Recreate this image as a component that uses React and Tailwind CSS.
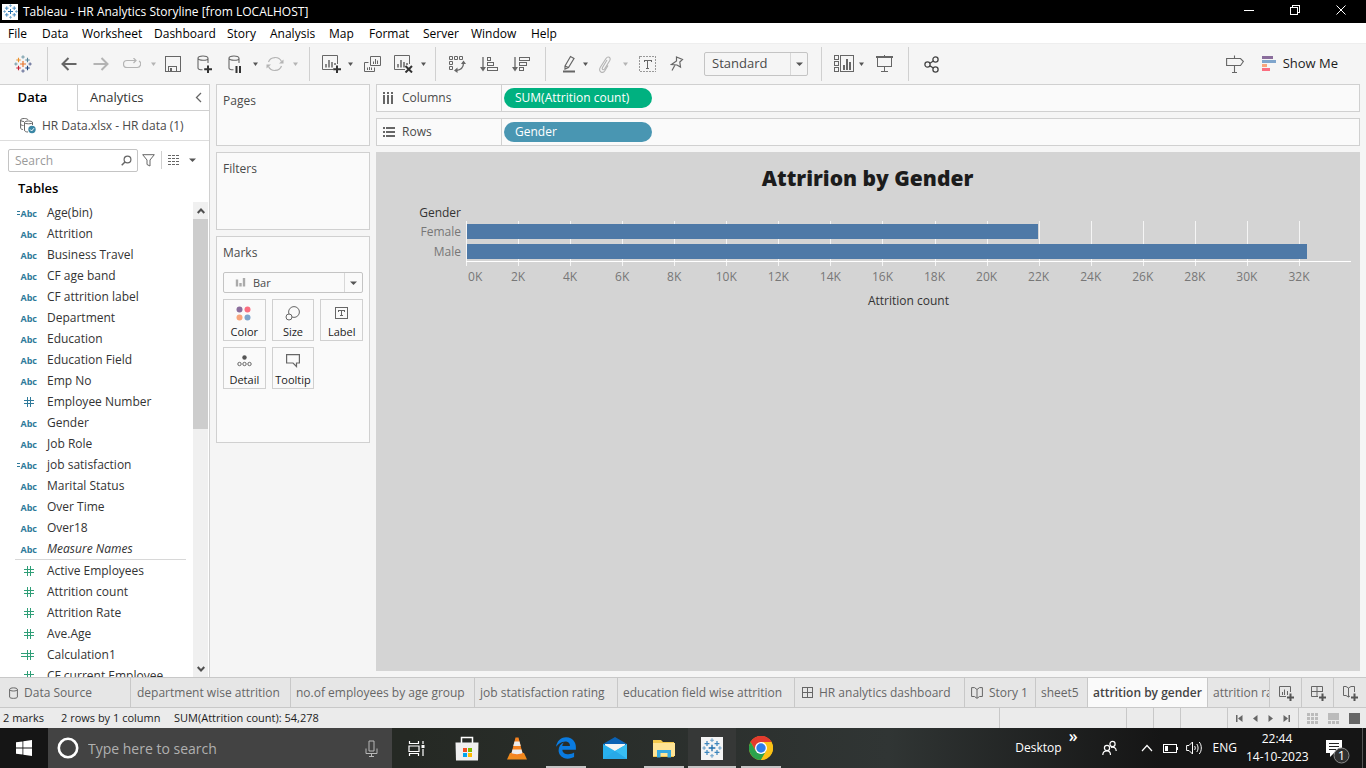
import React from "react";
import { FaEdgeLegacy } from "react-icons/fa6";

const OUT = "#666666";
const DIM = "#b4b4b4";

function Svg({ w, h, children, label, sharp }) {
  return (
    <svg
      width={w}
      height={h}
      viewBox={`0 0 ${w} ${h}`}
      fill="none"
      className="shrink-0"
      aria-hidden={label ? undefined : true}
      shapeRendering={sharp ? "crispEdges" : "auto"}
    >
      {children}
    </svg>
  );
}

const Caret = ({ color = "#555", size = 5 }) => (
  <Svg w={size} h={4}>
    <path d={`M0 0.5H${size}L${size / 2} 4Z`} fill={color} />
  </Svg>
);

/* ---------- Tableau marks ---------- */
const cross = (x, y, r) => `M${x - r} ${y}H${x + r}M${x} ${y - r}V${y + r}`;

function TableauMark({ size = 18, colors }) {
  const c = colors || ["#e8762d", "#c72035", "#1f457e", "#eb912b", "#59879b", "#7199a6", "#5c6692"];
  return (
    <svg width={size} height={size} viewBox="0 0 18 18" fill="none" className="shrink-0" aria-hidden="true">
      <path d={cross(9, 9, 3)} stroke={c[0]} strokeWidth="1.2" />
      <path d={cross(4.5, 13, 2.2)} stroke={c[1]} strokeWidth="1.1" />
      <path d={cross(13.5, 13, 2.2)} stroke={c[2]} strokeWidth="1.1" />
      <path d={cross(4.5, 5, 2.2)} stroke={c[3]} strokeWidth="1.1" />
      <path d={cross(13.5, 5, 2.2)} stroke={c[4]} strokeWidth="1.1" />
      <path d={cross(9, 2, 1.7) + cross(1.9, 9, 1.6)} stroke={c[5]} strokeWidth="1" />
      <path d={cross(9, 16, 1.7) + cross(16.1, 9, 1.6)} stroke={c[6]} strokeWidth="1" />
    </svg>
  );
}

const BLUE = ["#1f6fae", "#3d86bd", "#3d86bd", "#3d86bd", "#3d86bd", "#6ba3cc", "#6ba3cc"];

/* ---------- Toolbar icons ---------- */
const Back = () => (
  <Svg w={16} h={14}><path d="M15.5 7H1.5M7.5 1L1.5 7L7.5 13" stroke={OUT} strokeWidth="2" /></Svg>
);
const Forward = () => (
  <Svg w={16} h={14}><path d="M0.5 7H14.5M8.500 1L14.5 7L8.500 13" stroke={DIM} strokeWidth="2" /></Svg>
);
const Replay = () => (
  <Svg w={18} h={12}>
    <path d="M7 2.500H4A3.500 3.500 0 0 0 4 9.500H14A3.500 3.500 0 0 0 16 3M7 2.500H13M10.500 0L13 2.500L10.500 5" stroke={DIM} strokeWidth="1.2" />
  </Svg>
);
const Save = () => (
  <Svg w={16} h={16} sharp>
    <path d="M0.5 0.5H15.5V15.5H0.5Z" stroke={OUT} />
    <path d="M3.5 15.5V10.5H11.5V15.5" stroke={OUT} />
    <path d="M5 12H7V15H5Z" fill={OUT} />
  </Svg>
);
const DbShape = () => (
  <path d="M1 3.2C1 0.300 11 0.300 11 3.200C11 6 1 6 1 3.200ZM1 3.200V13C1 14.200 3 14.800 5.500 14.800M11 3.200V8" stroke={OUT} strokeWidth="1.1" />
);
const DbPlus = () => (
  <Svg w={16} h={18}><DbShape /><path d="M11 10.500V18M7.200 14.200H15" stroke="#333" strokeWidth="2" /></Svg>
);
const DbPause = () => (
  <Svg w={16} h={18}><DbShape /><path d="M8.500 11V18M12 11V18" stroke="#333" strokeWidth="2" /></Svg>
);
const Refresh = () => (
  <Svg w={18} h={16}>
    <path d="M2.500 6A7 6.700 0 0 1 15.500 5.500M15.500 10A7 6.700 0 0 1 2.500 10.500" stroke={DIM} strokeWidth="1.2" />
    <path d="M17.500 3.500V7.500H13ZM0.5 12.500V8.500H5Z" fill={DIM} />
  </Svg>
);
const ChartBox = ({ children }) => (
  <Svg w={19} h={18}>
    <path d="M11 14.500H0.5V0.5H15.500V9" stroke={OUT} />
    <path d="M4 12.500V9M7 12.500V5M10 12.500V7M13 10V8" stroke={OUT} strokeWidth="1.5" />
    {children}
  </Svg>
);
const NewSheet = () => <ChartBox><path d="M15 10.500V18M11.200 14.200H19" stroke="#333" strokeWidth="2" /></ChartBox>;
const ClearSheet = () => <ChartBox><path d="M11.500 11L18 17.500M18 11L11.500 17.500" stroke="#333" strokeWidth="2" /></ChartBox>;
const Duplicate = () => (
  <Svg w={17} h={16}>
    <path d="M6.500 0.5H16.500V9.500H6.500ZM4.500 6.500H0.5V15.500H10.500V11.500" stroke={OUT} />
    <path d="M9.500 8V5.500M11.500 8V3M13.500 8V4.500M3.500 14V11.500M5.500 14V11M7.500 14V11.500" stroke={OUT} />
  </Svg>
);
const Swap = () => (
  <Svg w={18} h={18}>
    <path d="M1.500 1.500H4.500V4.500H1.500ZM6.500 1.500H9.500V4.500H6.500ZM11.500 1.500H14.500V4.500H11.500ZM1.500 6.500H4.500V9.500H1.500ZM1.500 11.500H4.500V14.500H1.500Z" stroke={OUT} />
    <path d="M15.500 8C15.500 12 13 15 8 15.500" stroke={OUT} strokeWidth="1.3" />
    <path d="M13 9L15.500 5.500L18 9ZM9.500 12.500L6 15.500L9.500 18Z" fill={OUT} />
  </Svg>
);
const SortBars = ({ rows }) => (
  <Svg w={18} h={16}>
    <path d="M3 1V12" stroke={OUT} strokeWidth="1.3" />
    <path d="M0 11H6L3 15.500Z" fill={OUT} />
    {rows.map((r, i) => (
      <rect key={i} x="7.500" y={1.5 + i * 5} width={r} height="3" stroke={OUT} />
    ))}
  </Svg>
);
const Highlight = () => (
  <Svg w={14} h={18}>
    <path d="M3 11L8.500 1.500L12 3.500L6.500 12.500L3 14ZM3 11L6.500 12.500" stroke={OUT} strokeWidth="1.2" />
    <path d="M1 16.500H13" stroke={OUT} strokeWidth="2" />
  </Svg>
);
const Clip = () => (
  <Svg w={14} h={17}>
    <path d="M9 4L4.500 11.500C3.500 13.500 5.500 14.500 6.500 13L11.500 5C13.500 1.500 10 -0.500 8 2.500L2.500 11C-0.500 16 5 18 7 14.500L10 9.500" stroke={DIM} strokeWidth="1.1" />
  </Svg>
);
const TextLabel = () => (
  <Svg w={17} h={16} sharp>
    <path d="M0.5 0.5H16.5V15.5H0.5Z" stroke="#999" strokeDasharray="2 1" />
    <path d="M5 6V4.500H12V6M8.500 4.500V12M7 12.500H10" stroke={OUT} />
  </Svg>
);
const Pin = () => (
  <Svg w={14} h={16}>
    <path d="M6.500 1L12.500 3.500L9.800 6L10.500 11L7 9L1.500 8.500L6.500 5ZM5 9L2 14.500" stroke={OUT} strokeWidth="1.2" />
  </Svg>
);
const Cards = () => (
  <Svg w={20} h={18} sharp>
    <path d="M0.5 0.5H4.500V4.500H0.5ZM0.5 6.500H4.500V10.500H0.5ZM0.5 12.500H4.500V16.500H0.5ZM6.500 0.5H19.500V16.500H6.500Z" stroke={OUT} />
    <path d="M9 15V10H11V15ZM12 15V4H14V15ZM15 15V7H17V15Z" fill={OUT} />
  </Svg>
);
const Present = () => (
  <Svg w={17} h={18} sharp>
    <path d="M0 2H17" stroke={OUT} strokeWidth="2" />
    <path d="M1.500 2V11.500H15.500V2M8.500 0V2M8.500 11V16.500M5 16.500H12" stroke={OUT} />
  </Svg>
);
const Share = () => (
  <Svg w={16} h={17}>
    <g stroke="#444" strokeWidth="1.3">
      <circle cx="3.500" cy="8.500" r="2.600" /><circle cx="11.500" cy="3.500" r="2.600" /><circle cx="11.500" cy="13.500" r="2.600" />
      <path d="M6 7.200L9.300 5M6 9.900L9.300 12" />
    </g>
  </Svg>
);
const Signpost = () => (
  <Svg w={18} h={20}>
    <path d="M0.600 4.500H14.500L17.400 7.500L14.500 11.500H0.600ZM8.500 1.500V4.500M8.500 11.500V19M6 18.500H11" stroke={OUT} strokeWidth="1.1" />
  </Svg>
);
const ShowMeIcon = () => (
  <Svg w={15} h={16} sharp>
    <path d="M0 0H11V3H0Z" fill="#8a6d9c" /><path d="M0 4H14V7H0Z" fill="#7fa5cc" />
    <path d="M0 8H5V11H0Z" fill="#f8a57c" /><path d="M0 12H8V15H0Z" fill="#fb6e80" />
  </Svg>
);

const Tool = ({ w, label, children, disabled }) => (
  <button aria-label={label} disabled={disabled} className={`flex h-full shrink-0 items-center justify-center ${w}`}>
    {children}
  </button>
);
const Sep = ({ w }) => (
  <span className={`flex shrink-0 justify-center ${w}`}><span className="h-[34px] w-px bg-[#d0d0d0]" /></span>
);

function Toolbar() {
  return (
    <div className="flex h-[41px] shrink-0 items-center bg-[#f5f5f5] border-t border-[#eeeeee]">
      <Tool w="w-[46px]" label="Start page"><TableauMark /></Tool>
      <Sep w="w-[3px]" />
      <Tool w="w-10" label="Undo"><Back /></Tool>
      <Tool w="w-6" label="Redo"><Forward /></Tool>
      <Tool w="w-[38px]" label="Replay animation"><Replay /></Tool>
      <Tool w="w-1" label="Replay options"><Caret color={DIM} /></Tool>
      <Tool w="w-9" label="Save"><Save /></Tool>
      <Tool w="w-7" label="New data source"><DbPlus /></Tool>
      <Tool w="w-[34px]" label="Pause auto updates"><DbPause /></Tool>
      <Tool w="w-1" label="Update options"><Caret /></Tool>
      <Tool w="w-9" label="Run update"><Refresh /></Tool>
      <Tool w="w-1" label="Run options"><Caret color={DIM} /></Tool>
      <Sep w="w-6" />
      <Tool w="w-5" label="New worksheet"><NewSheet /></Tool>
      <Tool w="w-[18px]" label="New worksheet options"><Caret /></Tool>
      <Tool w="w-[26px]" label="Duplicate"><Duplicate /></Tool>
      <Tool w="w-9" label="Clear sheet"><ClearSheet /></Tool>
      <Tool w="w-1" label="Clear options"><Caret /></Tool>
      <Sep w="w-5" />
      <Tool w="w-6" label="Swap rows and columns"><Swap /></Tool>
      <Tool w="w-10" label="Sort ascending"><SortBars rows={[3, 6, 10]} /></Tool>
      <Tool w="w-6" label="Sort descending"><SortBars rows={[10, 7, 4]} /></Tool>
      <Sep w="w-6" />
      <Tool w="w-6" label="Highlight"><Highlight /></Tool>
      <Tool w="w-2" label="Highlight options"><Caret /></Tool>
      <Tool w="w-8" label="Group members"><Clip /></Tool>
      <Tool w="w-2" label="Group options"><Caret color={DIM} /></Tool>
      <Tool w="w-9" label="Show mark labels"><TextLabel /></Tool>
      <Tool w="w-6" label="Fix axes"><Pin /></Tool>
      <div className="relative ml-[15px] h-6 w-[104px] shrink-0">
        <select aria-label="Fit" className="block h-full w-full appearance-none rounded-[2px] border border-[#c4c4c4] bg-[#f5f5f5] pl-[7px] text-[13px] text-[#4a4a4a]">
          <option>Standard</option>
        </select>
        <span className="pointer-events-none absolute right-px top-px flex h-[22px] w-[17px] items-center justify-center border-l border-[#d8d8d8]"><Caret size={7} /></span>
      </div>
      <Sep w="w-[26px]" />
      <Tool w="w-5" label="Show or hide cards"><Cards /></Tool>
      <Tool w="w-[14px]" label="Card options"><Caret /></Tool>
      <Tool w="w-8" label="Presentation mode"><Present /></Tool>
      <Sep w="w-4" />
      <Tool w="w-8" label="Share"><Share /></Tool>
      <div className="ml-auto flex items-center pr-7">
        <Tool w="w-5" label="Data guide"><Signpost /></Tool>
        <button className="ml-[17px] flex items-center gap-1.5 text-[13px] text-[#1c1c1c]"><ShowMeIcon />Show Me</button>
      </div>
    </div>
  );
}

/* ---------- Data pane ---------- */
const DIMENSIONS = [
  ["=Abc", "Age(bin)"], ["Abc", "Attrition"], ["Abc", "Business Travel"], ["Abc", "CF age band"],
  ["Abc", "CF attrition label"], ["Abc", "Department"], ["Abc", "Education"], ["Abc", "Education Field"],
  ["Abc", "Emp No"], ["#", "Employee Number"], ["Abc", "Gender"], ["Abc", "Job Role"],
  ["=Abc", "job satisfaction"], ["Abc", "Marital Status"], ["Abc", "Over Time"], ["Abc", "Over18"],
  ["Abc", "Measure Names"],
];
const MEASURES = [
  ["#", "Active Employees"], ["#", "Attrition count"], ["#", "Attrition Rate"], ["#", "Ave.Age"],
  ["=#", "Calculation1"], ["#", "CF current Employee"],
];

const Hash = ({ color }) => (
  <Svg w={10} h={10} sharp><path d="M3.500 0V10M6.500 0V10M0 3.500H10M0 6.500H10" stroke={color} /></Svg>
);
const Equals = ({ color }) => (
  <Svg w={3} h={4} sharp><path d="M0 0.500H3M0 3.500H3" stroke={color} /></Svg>
);

function Field({ type, name, green }) {
  const calc = type.startsWith("=");
  const color = green ? "#2f9e77" : "#2f7a9a";
  return (
    <li className="flex h-[21px] items-center">
      <span className={`flex w-[37px] shrink-0 items-center justify-end text-[9px] font-bold ${green ? "text-[#2f9e77]" : "text-[#2f7a9a]"}`}>
        {calc && <Equals color={color} />}
        {type.endsWith("#") ? <span className="pr-[3px]"><Hash color={color} /></span> : <span className="pt-0.5">Abc</span>}
      </span>
      <span className={`pl-[10px] ${name === "Measure Names" ? "italic" : ""}`}>{name}</span>
    </li>
  );
}

function DataPane() {
  return (
    <aside className="flex w-[210px] shrink-0 flex-col border-r border-t border-[#d0d0d0] bg-white text-[12px] text-[#333]">
      <div className="flex h-[26px] shrink-0 text-[13px] text-black">
        <button className="w-[77px] pr-3 text-center font-semibold">Data</button>
        <div className="flex flex-1 items-center justify-between border-b border-l border-[#d0d0d0] pl-3 pr-[7px] text-[#333]">
          <button>Analytics</button>
          <button aria-label="Collapse pane"><Svg w={7} h={11}><path d="M6 1L1.500 5.500L6 10" stroke={OUT} strokeWidth="1.300" /></Svg></button>
        </div>
      </div>
      <button className="flex h-[30px] shrink-0 items-center gap-1.5 border-b border-[#dddddd] pl-5 text-[#4a4a4a]">
        <Svg w={16} h={17}>
          <path d="M0.600 3C0.600 1 8 1 8 3M0.600 3V11C0.600 12 2 12.500 3 12.500M0.600 3C0.600 4.200 3 4.500 4 4.500M4.500 5.500C4.500 3.500 12.500 3.500 12.500 5.500C12.500 7.200 4.500 7.200 4.500 5.500ZM4.500 5.500V13C4.500 14.500 6 15 8 15M12.500 5.500V8M0.600 7C0.600 8 2 8.500 3.500 8.500" stroke={OUT} />
          <circle cx="12" cy="12.500" r="3.700" fill="#3a87a5" />
          <path d="M10.200 12.500L11.600 14L14 11.200" stroke="white" />
        </Svg>
        HR Data.xlsx - HR data (1)
      </button>
      <div className="mt-[7px] flex h-6 shrink-0 items-center pl-2">
        <div className="relative h-[23px] w-[130px]">
          <input aria-label="Search fields" placeholder="Search" className="block h-full w-full rounded-[2px] border border-[#c4c4c4] pl-[6px] placeholder:text-[#9a9a9a]" />
          <span className="absolute right-[6px] top-[6px]">
            <Svg w={11} h={11}><circle cx="6.500" cy="4.500" r="3.400" stroke={OUT} strokeWidth="1.200" /><path d="M4 7L0.700 10.300" stroke={OUT} strokeWidth="1.500" /></Svg>
          </span>
        </div>
        <button aria-label="Filter" className="ml-1"><Svg w={13} h={13}><path d="M0.700 0.700H12.300L8 6V12L5 10.500V6Z" stroke={OUT} /></Svg></button>
        <span className="ml-1.5 h-[18px] w-px bg-[#d0d0d0]" />
        <button aria-label="View options" className="ml-1.5 flex items-center gap-[9px]">
          <Svg w={12} h={10} sharp><path d="M0 0.500H12M0 3.500H12M0 6.500H12M0 9.500H12" stroke={OUT} strokeDasharray="3 1" /></Svg>
          <Caret size={7} />
        </button>
      </div>
      <h2 className="mt-[6px] h-5 shrink-0 pl-[18px] text-[13px] font-semibold leading-5 text-black">Tables</h2>
      <div className="mt-1 flex min-h-0 flex-1">
        <div className="min-w-0 flex-1 overflow-hidden">
          <ul>{DIMENSIONS.map(([t, n]) => <Field key={n} type={t} name={n} />)}</ul>
          <div className="ml-[15px] mr-[7px] border-t border-[#d8d8d8]" />
          <ul>{MEASURES.map(([t, n]) => <Field key={n} type={t} name={n} green />)}</ul>
        </div>
        <div className="mr-px flex w-[15px] shrink-0 flex-col items-center justify-between bg-[#f0f0f0]">
          <div className="flex w-full flex-col items-center">
            <button aria-label="Scroll up" className="flex h-[17px] items-center"><Svg w={8} h={6}><path d="M0.700 5L4 1.500L7.300 5" stroke="#505050" strokeWidth="2" /></Svg></button>
            <div className="h-[210px] w-full bg-[#cdcdcd]" />
          </div>
          <button aria-label="Scroll down" className="flex h-[17px] items-center"><Svg w={8} h={6}><path d="M0.700 1L4 4.500L7.300 1" stroke="#505050" strokeWidth="2" /></Svg></button>
        </div>
      </div>
    </aside>
  );
}

/* ---------- Cards ---------- */
const MARKS = [
  ["Color", <Svg w={16} h={15}><circle cx="3.500" cy="3.500" r="3" fill="#8a6d9c" /><circle cx="11.500" cy="3.500" r="3" fill="#fb6e80" /><circle cx="3.500" cy="11.500" r="3" fill="#f8a57c" /><circle cx="11.500" cy="11.500" r="3" fill="#7fa5cc" /></Svg>],
  ["Size", <Svg w={16} h={15}><circle cx="9" cy="6" r="5.400" stroke={OUT} /><circle cx="4" cy="11" r="3" fill="#fafafa" stroke={OUT} /></Svg>],
  ["Label", <Svg w={14} h={13} sharp><path d="M0.500 0.500H12.500V11.500H0.500ZM3.500 4.500V3.500H9.500V4.500M6.500 3.500V8.500M5 8.500H8" stroke={OUT} /></Svg>],
  ["Detail", <Svg w={15} h={12}><circle cx="7.500" cy="2.500" r="2.200" fill="#555" /><circle cx="2.500" cy="9" r="1.700" stroke={OUT} /><circle cx="7.500" cy="9" r="1.700" stroke={OUT} /><circle cx="12.500" cy="9" r="1.700" stroke={OUT} /></Svg>],
  ["Tooltip", <Svg w={14} h={14}><path d="M0.600 0.600H13.400V9H10.500V12.500L7 9H0.600Z" stroke={OUT} strokeWidth="1.200" /></Svg>],
];

function CardsColumn() {
  const card = "border border-[#d0d0d0] bg-[#fafafa] px-[6px] pt-[7px]";
  return (
    <section className="flex w-[154px] shrink-0 flex-col gap-[6px] text-[12px] leading-[18px] text-[#4a4a4a]">
      <div className={`h-[62px] ${card}`}>Pages</div>
      <div className={`h-[78px] ${card}`}>Filters</div>
      <div className={`h-[207px] ${card}`}>
        Marks
        <div className="relative mt-[10px] h-[21px]">
          <select aria-label="Mark type" className="block h-full w-full appearance-none rounded-[2px] border border-[#c4c4c4] bg-[#fafafa] pl-[29px] text-[11px] text-[#4a4a4a]"><option>Bar</option></select>
          <span className="pointer-events-none absolute left-3 top-[5px]"><Svg w={11} h={10}><path d="M2 2.500V9.500M5.500 6V9.500M9 1V9.500" stroke="#aaa" strokeWidth="2.400" /></Svg></span>
          <span className="pointer-events-none absolute right-px top-px flex h-[19px] w-[18px] items-center justify-center border-l border-[#d8d8d8]"><Caret size={7} /></span>
        </div>
        <div className="mt-[6px] grid grid-cols-3 gap-[6px]">
          {MARKS.map(([name, icon]) => (
            <button key={name} className="flex h-[42px] flex-col items-center justify-between whitespace-nowrap border border-[#d0d0d0] pt-[5px] text-[11px] leading-4 text-[#1c1c1c]">
              <span className="flex h-4 items-center">{icon}</span>{name}
            </button>
          ))}
        </div>
      </div>
    </section>
  );
}

/* ---------- Shelves and view ---------- */
function Shelf({ label, icon, pill, color }) {
  return (
    <div className="flex h-7 shrink-0 border border-[#d0d0d0] bg-[#fafafa] text-[12px]">
      <div className="flex w-[125px] items-center gap-[7px] border-r border-[#d0d0d0] pl-[6px] text-[#4a4a4a]">{icon}{label}</div>
      <button className={`ml-0.5 mt-[3px] h-5 w-[148px] rounded-full pl-[11px] text-left font-medium leading-5 text-white ${color}`}>{pill}</button>
    </div>
  );
}

const MAX = 34;
const TICKS = Array.from({ length: 17 }, (_, i) => i * 2);
const BARS = [["Female", 21.96], ["Male", 32.318]];
const pct = (v) => `${(v / MAX) * 100}%`;

function View() {
  return (
    <section className="min-h-0 flex-1 bg-[#d4d4d4] pr-[9px] text-[12px]">
      <h1 className="h-[52px] pl-2 pt-3 text-center text-[21px] font-extrabold leading-7 text-[#1c1c1c]">Attririon by Gender</h1>
      <div className="flex">
        <div className="w-[90px] shrink-0 pr-[5px] text-right text-[#777]">
          <div className="h-[18px] leading-[18px] font-medium text-[#333]">Gender</div>
          {BARS.map(([n]) => <div key={n} className="h-5 leading-5">{n}</div>)}
        </div>
        <div className="min-w-0 flex-1 pt-[17px]">
          <div className="relative h-[45px]">
            {TICKS.map((t) => <span key={t} className="absolute inset-y-0 w-px bg-[#f5f5f5]" style={{ left: pct(t) }} />)}
            <span className="absolute inset-x-0 top-10 h-px bg-white" />
            <div className="relative flex flex-col gap-[5px] pl-px pt-[3px]">
              {BARS.map(([n, v]) => <div key={n} className="h-[15px] bg-[#4e79a7]" style={{ width: pct(v) }} />)}
            </div>
          </div>
          <div className="relative h-[26px] text-[#777]">
            {TICKS.map((t) => (
              <span key={t} className={`absolute top-[2px] leading-[18px] ${t ? "-translate-x-1/2" : "pl-0.5"}`} style={{ left: pct(t) }}>{t}K</span>
            ))}
          </div>
          <div className="text-center leading-[18px] font-medium text-[#333]">Attrition count</div>
        </div>
      </div>
    </section>
  );
}

/* ---------- Sheet tabs and status bar ---------- */
const Grid = () => <Svg w={11} h={11} sharp><path d="M0.500 0.500H10.500V10.500H0.500ZM5.500 0.500V10.500M0.500 5.500H10.500" stroke={OUT} /></Svg>;
const Book = () => <Svg w={12} h={12}><path d="M0.600 0.600H3.500L6 2.500L8.500 0.600H11.400V9.500H8.500L6 11.400L3.500 9.500H0.600ZM6 2.500V11" stroke={OUT} /></Svg>;
const Cylinder = () => <Svg w={9} h={12}><path d="M0.600 2.500C0.600 0.300 8.400 0.300 8.400 2.500C8.400 4.500 0.600 4.500 0.600 2.500ZM0.600 2.500V10C0.600 11.800 8.400 11.800 8.400 10V2.500" stroke={OUT} /></Svg>;

const TABS = [
  ["Data Source", "w-[131px] pl-[9px]", <Cylinder />],
  ["department wise attrition", "w-[160px] pl-[6px]"],
  ["no.of employees by age group", "w-[184px] pl-[5px]"],
  ["job statisfaction rating", "w-[143px] pl-[5px]"],
  ["education field wise attrition", "w-[177px] pl-[5px]"],
  ["HR analytics dashboard", "w-[170px] pl-[7px]", <Grid />],
  ["Story 1", "w-[71px] pl-[6px]", <Book />],
  ["sheet5", "w-[52px] pl-[5px]"],
  ["attrition by gender", "w-[120px] pl-[5px] bg-[#fafafa] font-semibold text-[#444]"],
];
const Plus = () => <path d="M12.500 8.500V16M9 12.500H16" stroke="#555" strokeWidth="2" />;

function SheetTabs() {
  return (
    <nav className="flex h-[31px] shrink-0 border-y border-[#c8c8c8] bg-[#e6e6e6] text-[12px] text-[#666]">
      {TABS.map(([name, cls, icon]) => (
        <button key={name} className={`flex shrink-0 items-center gap-[6px] whitespace-nowrap border-r border-[#c8c8c8] ${cls}`}>{icon}{name}</button>
      ))}
      <button className="min-w-0 flex-1 overflow-hidden whitespace-nowrap border-r border-[#c8c8c8] pl-[5px] text-left">attrition rate</button>
      <button aria-label="New worksheet" className="flex w-8 items-center justify-center border-r border-[#c8c8c8]">
        <Svg w={16} h={16}><path d="M8 11.500H1.500V1.500H12.500V7M4.500 10V7M6.500 10V4.500M9.500 10V6" stroke={OUT} /><Plus /></Svg>
      </button>
      <button aria-label="New dashboard" className="flex w-8 items-center justify-center border-r border-[#c8c8c8]">
        <Svg w={16} h={16}><path d="M8 11.500H1.500V1.500H12.500V7M7 1.500V11.500M1.500 6.500H12.500" stroke={OUT} /><Plus /></Svg>
      </button>
      <button aria-label="New story" className="flex w-8 items-center justify-center">
        <Svg w={16} h={16}><path d="M8 11L6.500 12L4 10.500H1.500V1.500H4L6.500 3L9 1.500H12.500V7M6.500 3V12" stroke={OUT} /><Plus /></Svg>
      </button>
    </nav>
  );
}

function StatusBar() {
  const cell = "h-full shrink-0 border-l border-[#c8c8c8]";
  return (
    <footer className="flex h-5 shrink-0 items-center bg-[#ebebeb] text-[11px] text-[#1c1c1c]">
      <span className="w-[58px] pl-[3px]">2 marks</span>
      <span className="w-[113px] pl-[3px]">2 rows by 1 column</span>
      <span className="flex-1 pl-[3px]">SUM(Attrition count): 54,278</span>
      <span className={`w-[127px] ${cell}`} />
      <span className={`w-[27px] ${cell}`} />
      <span className={`w-[27px] ${cell}`} />
      <span className={`w-[47px] ${cell}`} />
      <div className={`flex w-[71px] items-center justify-between px-2 ${cell}`}>
        <button aria-label="First sheet"><Svg w={7} h={7}><path d="M0 0H1.500V7H0ZM6.500 0V7L2 3.500Z" fill={OUT} /></Svg></button>
        <button aria-label="Previous sheet"><Svg w={5} h={7}><path d="M4.500 0V7L0 3.500Z" fill={OUT} /></Svg></button>
        <button aria-label="Next sheet"><Svg w={5} h={7}><path d="M0.500 0V7L5 3.500Z" fill={OUT} /></Svg></button>
        <button aria-label="Last sheet"><Svg w={7} h={7}><path d="M5.500 0H7V7H5.500ZM0.500 0V7L5 3.500Z" fill={OUT} /></Svg></button>
      </div>
      <div className={`flex w-[68px] items-center gap-2.5 pl-2 ${cell}`}>
        <button aria-label="Sheet sorter"><Svg w={11} h={11} sharp><path d="M0 1.500H11M0 5.500H11M0 9.500H11" stroke="#bbb" strokeWidth="3" strokeDasharray="3 1" /></Svg></button>
        <button aria-label="Filmstrip"><Svg w={11} h={11} sharp><path d="M0 0H11V7H0Z" fill="#bbb" /><path d="M0 9.500H11" stroke="#bbb" strokeWidth="3" strokeDasharray="3 1" /></Svg></button>
        <button aria-label="Tabs"><Svg w={11} h={11} sharp><path d="M0 0H11V11H0Z" fill={OUT} /></Svg></button>
      </div>
    </footer>
  );
}

/* ---------- Windows taskbar ---------- */
const TaskButton = ({ label, open, active, children, w = "w-[49px]" }) => (
  <button aria-label={label} className={`flex h-full shrink-0 flex-col items-center ${w} ${active ? "bg-[#363837]" : ""}`}>
    <span className="flex flex-1 items-center pt-0.5">{children}</span>
    <span className={`h-0.5 ${active ? "w-full" : "w-10"} ${open ? "bg-[#c4c4c4]" : ""}`} />
  </button>
);

function Taskbar() {
  return (
    <div className="flex h-10 shrink-0 items-center bg-linear-to-r from-[#252924] from-30% via-[#303534] via-65% to-[#151515] to-85% text-[12px] text-white">
      <button aria-label="Start" className="flex h-full w-12 shrink-0 items-center justify-center bg-[#151515]">
        <Svg w={16} h={16}><path d="M0 2.300L6.500 1.400V7.600H0ZM7.300 1.300L16 0V7.600H7.300ZM0 8.400H6.500V14.600L0 13.700ZM7.300 8.400H16V16L7.300 14.700Z" fill="white" /></Svg>
      </button>
      <div className="flex h-full w-[344px] shrink-0 items-center bg-[#434343] pl-[9px] pr-3.5">
        <Svg w={22} h={22}><circle cx="11" cy="11" r="9.200" stroke="white" strokeWidth="2.600" /></Svg>
        <input aria-label="Type here to search" placeholder="Type here to search" className="min-w-0 flex-1 bg-transparent pl-[9px] text-[14px] placeholder:text-[#b0b0b0]" />
        <button aria-label="Voice search"><Svg w={13} h={17}><path d="M4 1H9V11H4ZM1 8.500V13.500H12V8.500M6.500 13.500V16.500M4 16.500H9" stroke="#b8b8b8" /></Svg></button>
      </div>
      <TaskButton label="Task view"><Svg w={17} h={15}><path d="M1.500 0V2.500H10.500V0M1 5H11V10.500H1ZM1.500 15V12.500H10.500V15M15 0V3M15 8V15" stroke="white" strokeWidth="1.200" /><path d="M13.500 4H16.500V7H13.500Z" fill="white" /></Svg></TaskButton>
      <TaskButton label="Microsoft Store" w="w-[51px]"><Svg w={24} h={25}><path d="M6.500 7V1.500H17.500V7" stroke="white" strokeWidth="1.500" /><path d="M0.500 6.500H23.500L23 24.500H1Z" fill="#efefef" /><path d="M8 12H12V16H8Z" fill="#f25022" /><path d="M13 12H17V16H13Z" fill="#7fba00" /><path d="M8 17H12V21H8Z" fill="#00a4ef" /><path d="M13 17H17V21H13Z" fill="#ffb900" /></Svg></TaskButton>
      <TaskButton label="VLC"><Svg w={20} h={23}><path d="M3 16H17L20 22.500H0Z" fill="#f08a1c" /><path d="M8.500 0.500H11.500L16 18C14 20 6 20 4 18Z" fill="#f58220" /><path d="M7.500 4.500H12.500L13.700 9H6.300Z" fill="#ececec" /><path d="M5.500 12.500H14.500L15.500 16C13.500 17.500 6.500 17.500 4.500 16Z" fill="#ececec" /></Svg></TaskButton>
      <TaskButton label="Edge" open><FaEdgeLegacy size={22} color="#0a7be0" /></TaskButton>
      <TaskButton label="Mail"><Svg w={24} h={23}><path d="M0 7L12 0L24 7V13H0Z" fill="#0a62b5" /><path d="M2 7H22V15H2Z" fill="#f4f4f4" /><path d="M0 7L12 14L24 7V22H0Z" fill="#28b0ee" /><path d="M12 14L24 22V7Z" fill="#38bdf2" /><path d="M0 22L12 14L24 22Z" fill="#28a9e8" /></Svg></TaskButton>
      <TaskButton label="File Explorer" open><Svg w={22} h={19}><path d="M0 1H8L10 3H21V18H0Z" fill="#f3c84c" /><path d="M0 4H22V17H0Z" fill="#ffe495" /><path d="M4 11H18V18.500H14.500V14H7.500V18.500H4Z" fill="#36a9e0" /></Svg></TaskButton>
      <TaskButton label="Tableau" open active w="w-12"><span className="flex h-[23px] w-[22px] items-center justify-center bg-[#f4f4f4]"><TableauMark size={20} colors={BLUE} /></span></TaskButton>
      <TaskButton label="Chrome" open>
        <Svg w={24} h={24}>
          <circle cx="12" cy="12" r="12" fill="#fbbc05" />
          <path d="M12 12L1.600 6A12 12 0 0 1 22.400 6Z" fill="#e33b2e" /><path d="M12 6H22.400A12 12 0 0 0 1.600 6L6.800 15Z" fill="#e33b2e" />
          <path d="M1.600 6A12 12 0 0 0 12 24L17.200 15L12 12L6.800 15Z" fill="#2ba24c" />
          <path d="M12 6H22.400A12 12 0 0 1 12 24L17.200 15Z" fill="#fbc116" />
          <circle cx="12" cy="12" r="6" fill="white" /><circle cx="12" cy="12" r="4.700" fill="#2d7de9" />
        </Svg>
      </TaskButton>
      <div className="ml-auto flex h-full items-center">
        <button className="flex h-full items-center">Desktop<span className="self-start pl-[7px] text-[16px] font-semibold leading-4">»</span></button>
        <button aria-label="People" className="ml-6"><Svg w={15} h={16}><circle cx="10.500" cy="4" r="2.600" stroke="white" strokeWidth="1.200" /><circle cx="5" cy="8" r="2.600" stroke="white" strokeWidth="1.200" /><path d="M0.800 15C0.800 12 2.500 10.800 5 10.800C7.500 10.800 8.500 12.500 8.500 15M9 7.500C12 6.500 14.200 8 14.200 11" stroke="white" strokeWidth="1.200" /></Svg></button>
        <button aria-label="Hidden icons" className="ml-6"><Svg w={12} h={8}><path d="M1 7L6 1.500L11 7" stroke="white" strokeWidth="1.200" /></Svg></button>
        <button aria-label="Battery" className="ml-2.5"><Svg w={15} h={9} sharp><path d="M0.500 0.500H13.500V8.500H0.500ZM14.500 3V6" stroke="white" /><path d="M2 2H5V7H2Z" fill="white" /></Svg></button>
        <button aria-label="Volume" className="ml-2"><Svg w={17} h={14}><path d="M0.600 4.500H3L6.500 1V13L3 9.500H0.600ZM8.500 5C9.500 6 9.500 8 8.500 9M10.800 3C12.500 5 12.500 9 10.800 11M13.200 1C16 4 16 10 13.200 13" stroke="white" /></Svg></button>
        <button className="ml-2.5">ENG</button>
        <button className="ml-[9px] w-[62px] whitespace-nowrap text-center leading-[18px]"><span className="block">22:44</span><span className="block">14-10-2023</span></button>
        <button aria-label="Notifications" className="relative ml-[18px] mr-3 pt-2">
          <Svg w={24} h={24}><path d="M0 0H16V13H8L4 17V13H0Z" fill="white" /><path d="M3 3.500H13M3 6.500H13M3 9.500H10" stroke="#222" /><circle cx="15.500" cy="15.500" r="7.500" fill="#303030" stroke="#8a8a8a" /></Svg>
          <span className="absolute bottom-0 right-0 w-[17px] text-center text-[13px] leading-[18px]">1</span>
        </button>
        <span className="mr-[3px] h-full w-px bg-[#555]" />
      </div>
    </div>
  );
}

const MENU = [
  ["File", "w-[34px]"], ["Data", "w-10"], ["Worksheet", "w-[72px]"], ["Dashboard", "w-[73px]"], ["Story", "w-[43px]"],
  ["Analysis", "w-[59px]"], ["Map", "w-10"], ["Format", "w-[54px]"], ["Server", "w-12"], ["Window", "w-[60px]"], ["Help", "w-10"],
];

export default function App() {
  return (
    <div className="flex h-screen flex-col overflow-hidden bg-[#f5f5f5] font-['Open_Sans','Noto_Sans',sans-serif]">
      <header className="flex h-[23px] shrink-0 items-center bg-black pl-0.5 text-[12px] text-white">
        <span className="flex h-4 w-4 items-center justify-center bg-white"><TableauMark size={15} colors={BLUE} /></span>
        <span className="pl-[5px]">Tableau - HR Analytics Storyline [from LOCALHOST]</span>
        <div className="ml-auto flex pb-[3px] pr-0.5">
          <button aria-label="Minimize" className="flex w-[46px] items-center justify-center"><Svg w={10} h={10} sharp><path d="M0 5.500H10" stroke="white" /></Svg></button>
          <button aria-label="Restore" className="flex w-[46px] items-center justify-center"><Svg w={10} h={10} sharp><path d="M0.500 2.500H7.500V9.500H0.500ZM2.500 2.500V0.500H9.500V7.500H7.500" stroke="white" /></Svg></button>
          <button aria-label="Close" className="flex w-[46px] items-center justify-center"><Svg w={10} h={10}><path d="M0.500 0.500L9.500 9.500M9.500 0.500L0.500 9.500" stroke="white" /></Svg></button>
        </div>
      </header>
      <nav className="flex h-5 shrink-0 items-center bg-white pl-2 pt-0.5 text-[12px] text-black">
        {MENU.map(([m, w]) => <button key={m} className={`shrink-0 text-left ${w}`}>{m}</button>)}
      </nav>
      <Toolbar />
      <main className="flex min-h-0 flex-1">
        <DataPane />
        <div className="flex min-w-0 flex-1 gap-[6px] pb-[6px] pl-[6px] pr-[6px]">
          <CardsColumn />
          <div className="flex min-w-0 flex-1 flex-col gap-[6px]">
            <Shelf label="Columns" pill="SUM(Attrition count)" color="bg-[#00b180]" icon={<Svg w={12} h={12} sharp><path d="M1 0V2M1 3V12M5 0V2M5 3V12M9 0V2M9 3V12" stroke={OUT} strokeWidth="2" /></Svg>} />
            <Shelf label="Rows" pill="Gender" color="bg-[#4996b2]" icon={<Svg w={12} h={10} sharp><path d="M0 1H2M3 1H12M0 5H2M3 5H12M0 9H2M3 9H12" stroke={OUT} strokeWidth="2" /></Svg>} />
            <View />
          </div>
        </div>
      </main>
      <SheetTabs />
      <StatusBar />
      <Taskbar />
    </div>
  );
}
